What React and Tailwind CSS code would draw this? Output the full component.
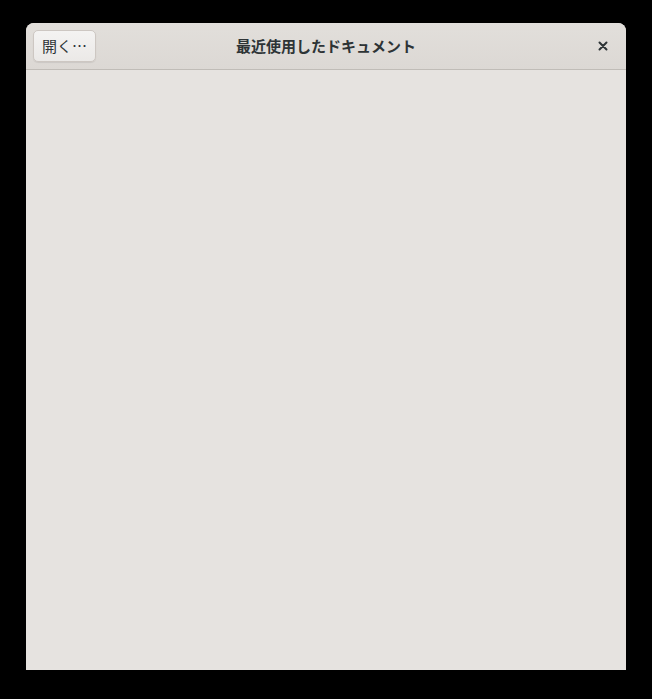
import React from 'react';

export default function App() {
  return (
    <div className="w-[652px] h-[699px] bg-black pt-[23px] pl-[26px]" style={{ fontFamily: '"Noto Sans", "Noto Sans CJK JP", sans-serif' }}>
      <div className="w-[600px] h-[647px] flex flex-col bg-[#e6e3e0] rounded-t-[8px] overflow-hidden">
        <div className="h-[47px] shrink-0 flex items-center px-[7px] border-b border-[#c0bcb7] bg-gradient-to-b from-[#e2dfdb] to-[#dcd8d4]">
          <div className="w-[110px]">
            <button className="h-[32px] w-[63px] rounded-[5px] border border-[#cdc7c2] bg-gradient-to-b from-[#f4f3f2] to-[#ebe9e7] shadow-[0_1px_1px_rgba(0,0,0,0.08)] text-[15px] text-[#2e3436] flex items-center justify-center font-['Noto_Sans_CJK_JP',sans-serif]">
              開く…
            </button>
          </div>
          <div className="flex-1 text-center text-[15px] font-bold text-[#2e3436]">最近使用したドキュメント</div>
          <div className="w-[110px] flex justify-end pr-[11px]">
            <svg width="10" height="10" viewBox="0 0 10 10">
              <path d="M1.5 1.5 L8.5 8.5 M8.5 1.5 L1.5 8.5" stroke="#2e3436" strokeWidth="2" strokeLinecap="round" />
            </svg>
          </div>
        </div>
        <div className="flex-1" />
      </div>
    </div>
  );
}
